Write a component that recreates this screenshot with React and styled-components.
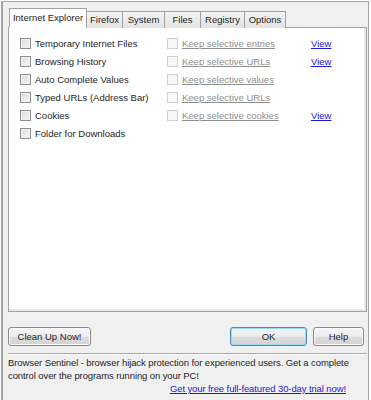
import React from 'react';
import styled, { createGlobalStyle } from 'styled-components';

const Global = createGlobalStyle`
  html, body { margin: 0; padding: 0; background: #ffffff; }
  body { font-family: "Liberation Sans", Arial, sans-serif; font-size: 9.5px; color: #1e1e1e; }
`;

const Frame = styled.div`
  margin: 1px 0 0 1px;
  width: 368px;
  height: 399px;
  box-sizing: border-box;
  border: 1px solid #a3a3a3;
  border-bottom: none;
  border-left-width: 2px;
  background: #f0f0f0;
  padding: 6px 0 0 5px;
  display: flex;
  flex-direction: column;
`;

const TabBar = styled.div`
  display: flex;
  align-items: flex-end;
  height: 20px;
  padding-left: 1px;
  position: relative;
  z-index: 1;
`;

const Tab = styled.div`
  box-sizing: border-box;
  width: ${p => p.$w}px;
  text-align: center;
  height: ${p => (p.$active ? '20px' : '17px')};
  padding-top: ${p => (p.$active ? '3px' : '2px')};
  margin-left: -1px;
  border: 1px solid #a0a0a0;
  border-bottom: ${p => (p.$active ? '1px solid #ffffff' : 'none')};
  background: ${p => (p.$active ? '#ffffff' : 'linear-gradient(#f3f3f3, #e3e3e3)')};
  color: #1e1e1e;
  white-space: nowrap;
  &:first-child { margin-left: 0; }
`;

const Panel = styled.div`
  width: 359px;
  height: 285px;
  box-sizing: border-box;
  margin-top: -1px;
  border: 1px solid #a0a0a0;
  box-shadow: inset -2px -2px 0 #e8e8e8;
  background: #ffffff;
  padding: 9px 0 0 11px;
  display: flex;
  flex-direction: column;
  gap: 6px;
`;

const Row = styled.div`
  display: grid;
  grid-template-columns: 147px 144px auto;
  align-items: center;
  height: 12px;
`;

const Check = styled.label`
  display: flex;
  align-items: center;
  gap: 4px;
  color: ${p => (p.$disabled ? '#8d8d8d' : '#1e1e1e')};
  text-decoration: ${p => (p.$disabled ? 'underline' : 'none')};
  white-space: nowrap;
`;

const Box = styled.span`
  width: 11px;
  height: 11px;
  box-sizing: border-box;
  border: 1px solid ${p => (p.$disabled ? '#cfcfcf' : '#8e8e8e')};
  background: ${p => (p.$disabled ? '#f7f7f7' : 'linear-gradient(135deg, #dcdcdc, #f4f4f4)')};
  box-shadow: ${p => (p.$disabled ? 'none' : 'inset 0 0 0 1px #f2f2f2')};
`;

const Link = styled.a`
  color: #1a1ad0;
  text-decoration: underline;
  cursor: pointer;
`;

const ButtonRow = styled.div`
  display: flex;
  align-items: center;
  margin-top: 15px;
  width: 359px;
  box-sizing: border-box;
  padding-right: 3px;
  gap: 6px;
`;

const Button = styled.button`
  font-family: inherit;
  font-size: 9.5px;
  color: #1e1e1e;
  height: 19px;
  width: ${p => p.$w}px;
  padding: 0;
  border-radius: 3px;
  border: 1px solid ${p => (p.$default ? '#3c8fc0' : '#8a8a8a')};
  background: linear-gradient(#f5f5f5 0%, #ececec 50%, #dcdcdc 51%, #d4d4d4 100%);
  box-shadow: inset 0 0 0 1px ${p => (p.$default ? '#9fd6f0' : '#fafafa')};
  &:first-child { margin-right: auto; }
`;

const Separator = styled.div`
  width: 359px;
  height: 0;
  border-top: 1px solid #a8a8a8;
  border-bottom: 1px solid #ffffff;
  margin-top: 7px;
`;

const Footer = styled.div`
  width: 359px;
  padding-top: 1px;
  line-height: 13px;
  letter-spacing: -0.1px;
  color: #1e1e1e;
`;

const FooterLink = styled.div`
  text-align: right;
  padding-right: 21px;
`;

const tabs = [
  { name: 'Internet Explorer', w: 78 },
  { name: 'Firefox', w: 37 },
  { name: 'System', w: 43 },
  { name: 'Files', w: 37 },
  { name: 'Registry', w: 45 },
  { name: 'Options', w: 42 },
];

const items = [
  { label: 'Temporary Internet Files', keep: 'Keep selective entries', view: true },
  { label: 'Browsing History', keep: 'Keep selective URLs', view: true },
  { label: 'Auto Complete Values', keep: 'Keep selective values' },
  { label: 'Typed URLs (Address Bar)', keep: 'Keep selective URLs' },
  { label: 'Cookies', keep: 'Keep selective cookies', view: true },
  { label: 'Folder for Downloads' },
];

const App = () => {
  return (
    <Frame>
      <Global />
      <TabBar>
        {tabs.map((t, i) => (
          <Tab key={t.name} $w={t.w} $active={i === 0}>{t.name}</Tab>
        ))}
      </TabBar>
      <Panel>
        {items.map(it => (
          <Row key={it.label}>
            <Check><Box />{it.label}</Check>
            {it.keep ? <Check $disabled><Box $disabled />{it.keep}</Check> : <span />}
            {it.view ? <Link>View</Link> : <span />}
          </Row>
        ))}
      </Panel>
      <ButtonRow>
        <Button $w={83}>Clean Up Now!</Button>
        <Button $w={77} $default>OK</Button>
        <Button $w={51}>Help</Button>
      </ButtonRow>
      <Separator />
      <Footer>
        Browser Sentinel - browser hijack protection for experienced users. Get a complete control over the programs running on your PC!
        <FooterLink><Link>Get your free full-featured 30-day trial now!</Link></FooterLink>
      </Footer>
    </Frame>
  );
};

export default App;
